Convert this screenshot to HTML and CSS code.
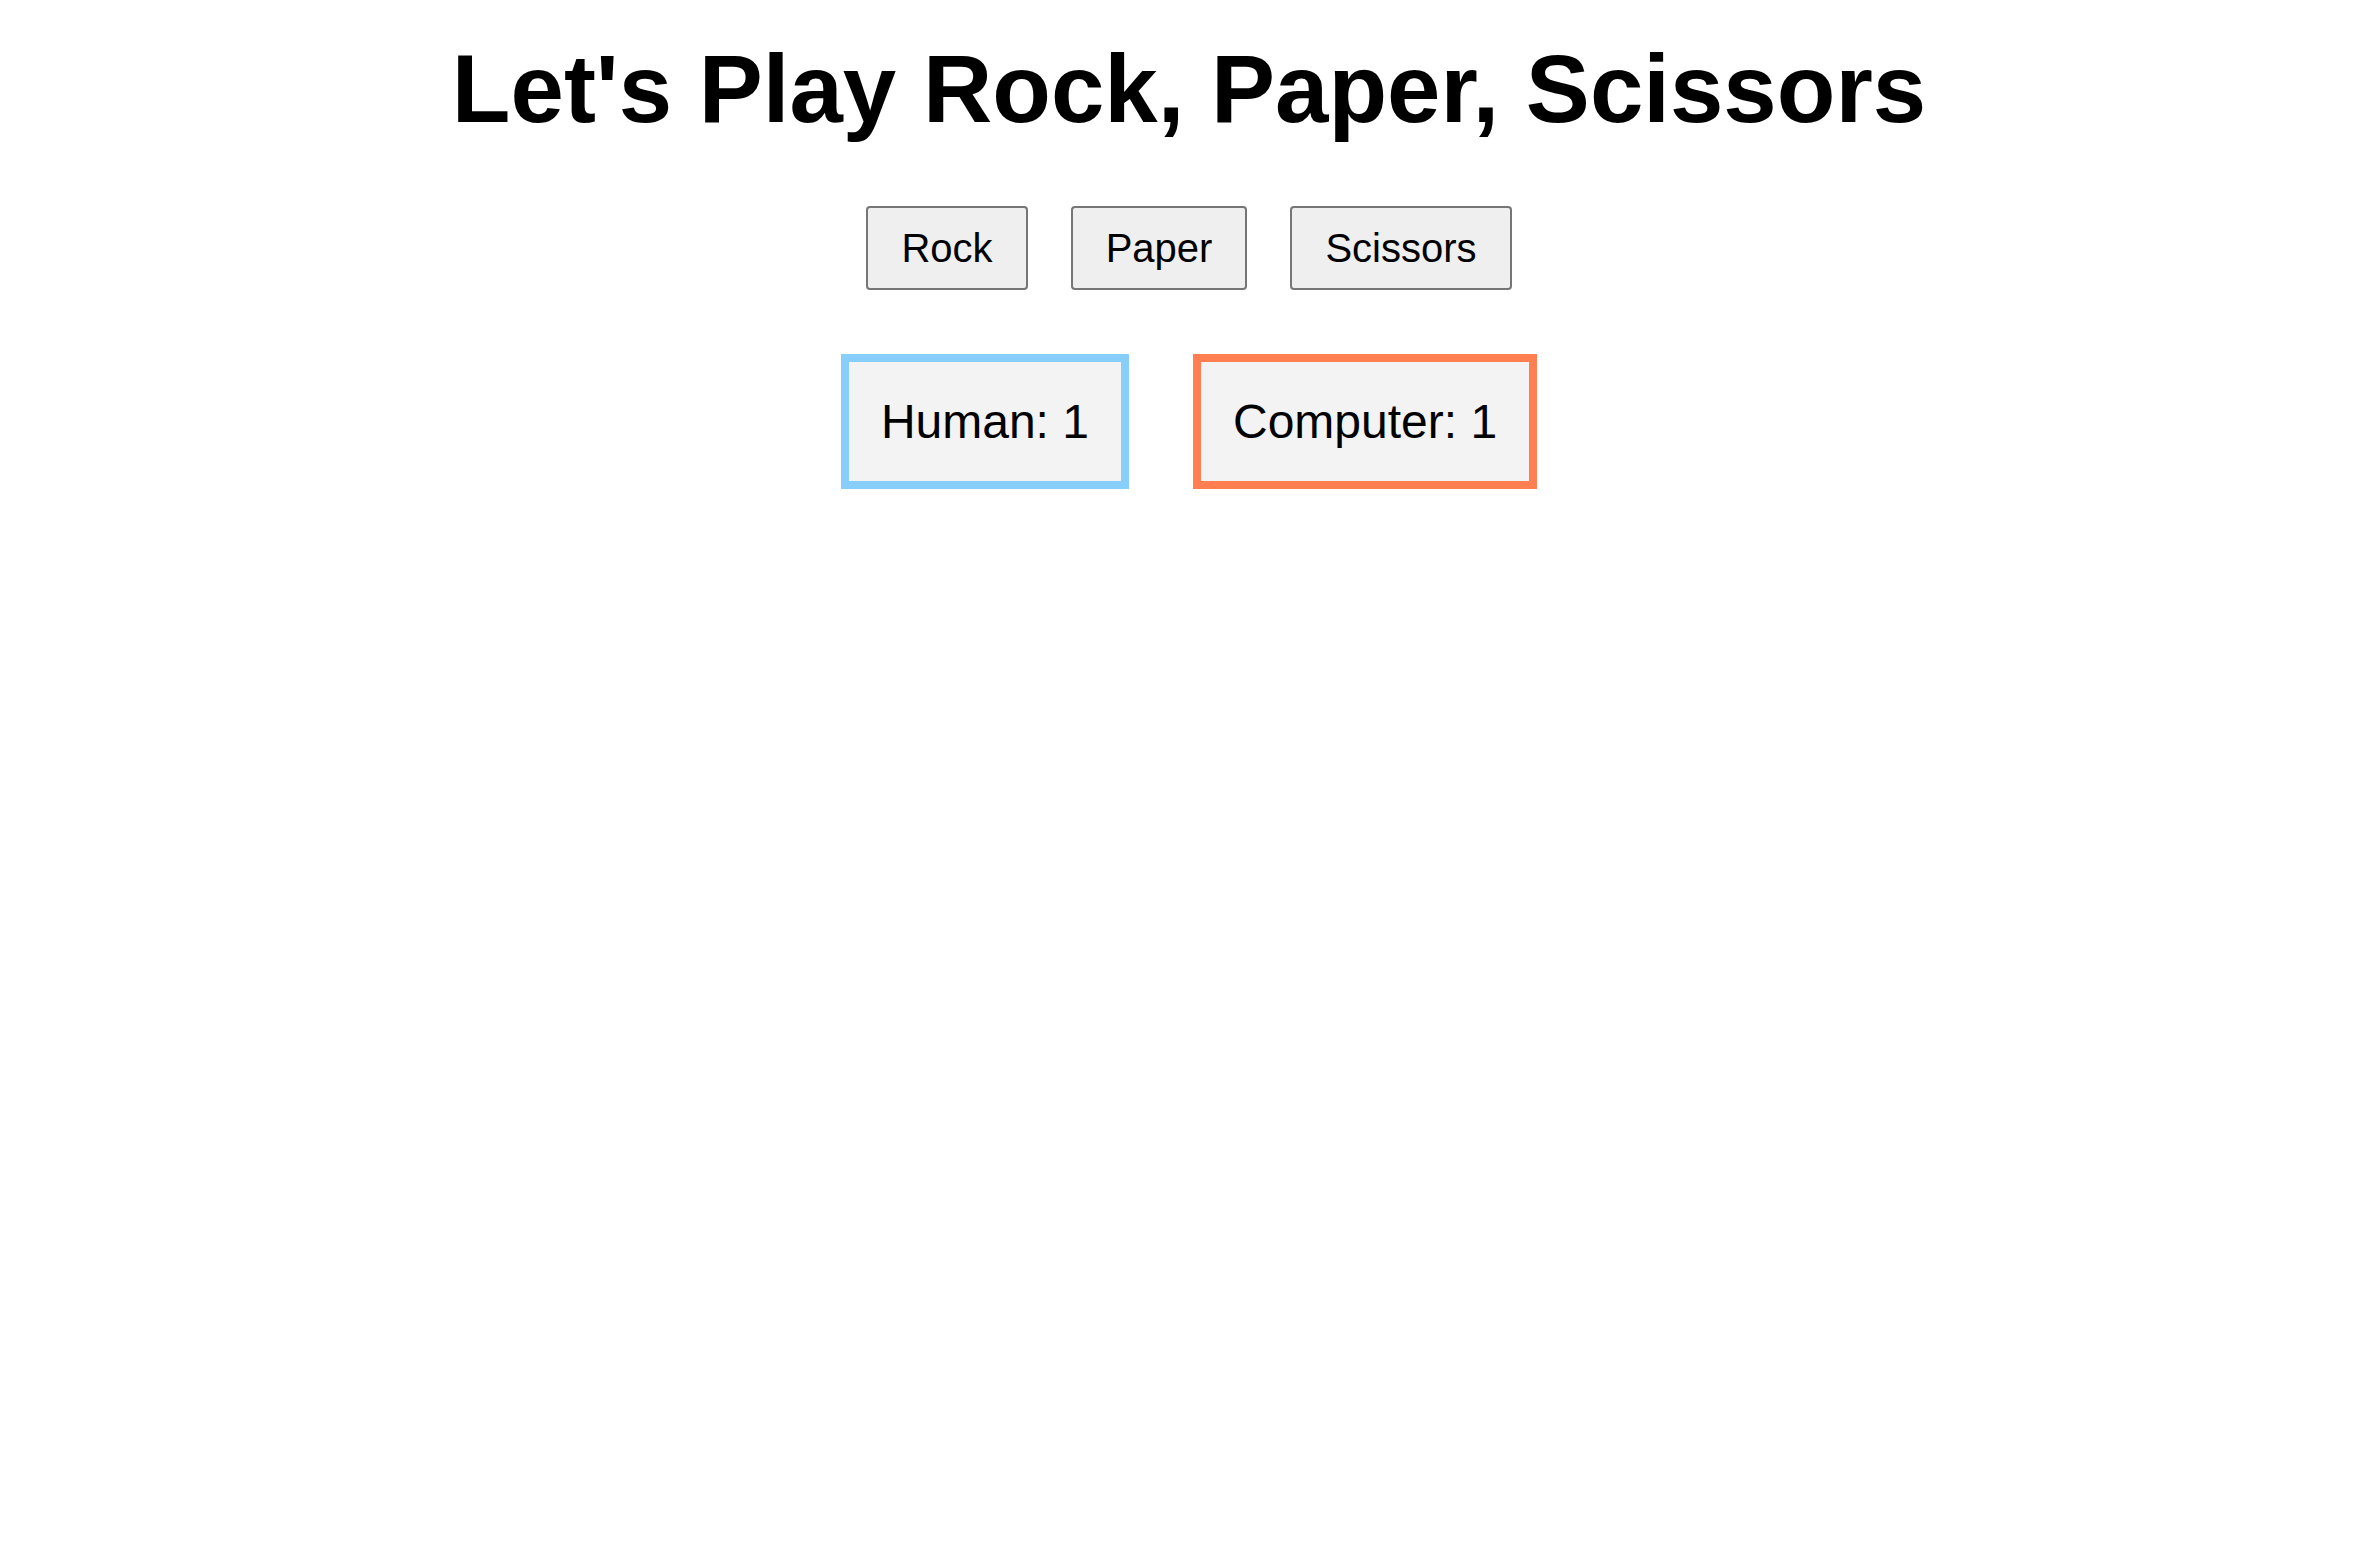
FILE: index.html
```html
<!DOCTYPE html>
<html lang="en">
<head>
<meta charset="utf-8">
<title>Rock, Paper, Scissors</title>
<link rel="stylesheet" href="styles.css">
</head>
<body>
  <main class="game">
    <h1 class="title">Let's Play Rock, Paper, Scissors</h1>
    <div class="choices">
      <button class="choice" type="button">Rock</button>
      <button class="choice" type="button">Paper</button>
      <button class="choice" type="button">Scissors</button>
    </div>
    <div class="scores">
      <div class="score score-human">Human: 1</div>
      <div class="score score-computer">Computer: 1</div>
    </div>
  </main>
</body>
</html>
```
FILE: styles.css
```css
html, body {
  margin: 0;
  padding: 0;
  background: #ffffff;
}

body {
  font-family: "Liberation Sans", Arial, sans-serif;
  color: #000000;
}

.game {
  display: flex;
  flex-direction: column;
  align-items: center;
  padding-top: 35px;
}

.title {
  margin: 0;
  font-size: 96px;
  font-weight: bold;
  line-height: 107px;
  text-align: center;
}

.choices {
  display: flex;
  gap: 43px;
  margin-top: 64px;
}

.choice {
  font-family: "Liberation Sans", Arial, sans-serif;
  font-size: 40px;
  line-height: 46px;
  padding: 17px 33px;
  color: #000000;
  background: #efefef;
  border: 2px solid #767676;
  border-radius: 4px;
}

.scores {
  display: flex;
  gap: 64px;
  margin-top: 64px;
}

.score {
  font-size: 48px;
  line-height: 55px;
  padding: 32px;
  background: #f3f3f3;
  border: 8px solid;
}

.score-human {
  border-color: #87cefa;
}

.score-computer {
  border-color: #ff7f50;
}
```
